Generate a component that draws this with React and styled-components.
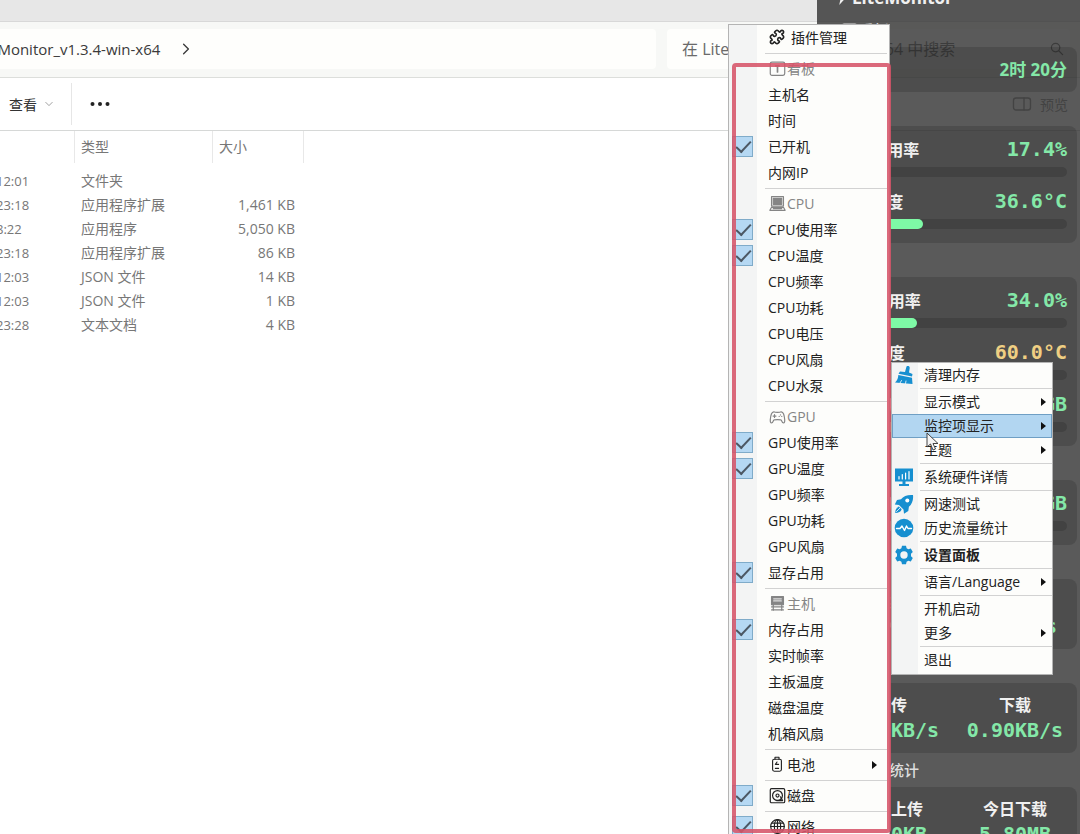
import React, { useState } from 'react';
import styled, { createGlobalStyle, css } from 'styled-components';
import { Puzzle } from 'lucide-react';

const GlobalStyle = createGlobalStyle`
  * {
    box-sizing: border-box;
  }
  body {
    margin: 0;
    font-family: "Open Sans", "Noto Sans CJK SC", sans-serif;
    font-size: 14px;
    color: #222;
    overflow: hidden;
  }
  button, input {
    font: inherit;
    color: inherit;
  }
`;

const Desktop = styled.main`
  position: relative;
  height: 100vh;
  overflow: hidden;
  background: #fff;
`;

/* ---------- file explorer ---------- */

const Explorer = styled.section`
  position: absolute;
  inset: 0 0 0 -48px;
  display: flex;
  flex-direction: column;
  background: #fff;
`;

const TitleStrip = styled.header`
  height: 22px;
  background: #e7e7e7;
  border-bottom: 1px solid #d8d8d8;
`;

const AddressBar = styled.div`
  display: flex;
  gap: 11px;
  padding: 7px 10px 8px 0;
  background: #f7f8f6;
  border-bottom: 1px solid #dcdedb;
`;

const Field = styled.div`
  display: flex;
  align-items: center;
  height: 40px;
  background: #fefefc;
  border-radius: 4px;
  font-size: 16px;
`;

const PathField = styled(Field)`
  flex: 1;
  gap: 20px;
  padding-left: 20px;
  font-size: 15px;
  color: #3a3a3a;
`;

const SearchField = styled(Field)`
  width: 403px;
  padding: 0 6px 0 15px;
  color: #6a6a6a;
`;

const SearchInput = styled.input`
  flex: 1;
  min-width: 0;
  padding: 0;
  border: 0;
  outline: 0;
  background: none;
  &::placeholder {
    color: #6a6a6a;
    opacity: 1;
  }
`;

const Toolbar = styled.div`
  display: flex;
  align-items: center;
  height: 53px;
  padding: 0 12px 0 57px;
  border-bottom: 1px solid #d6d8d7;
`;

const ToolButton = styled.button`
  display: flex;
  align-items: center;
  gap: 8px;
  padding: 0;
  border: 0;
  background: none;
  color: ${({ $muted }) => ($muted ? '#8a8a8a' : '#333')};
`;

const ToolDivider = styled.span`
  width: 1px;
  height: 42px;
  margin: 0 18px;
  background: #e6e6e6;
`;

const Spacer = styled.span`
  flex: 1;
`;

const FileTable = styled.table`
  width: 352px;
  table-layout: fixed;
  border-collapse: collapse;
  color: #777;
  th {
    padding: 0 0 6px;
    font-weight: 400;
    text-align: left;
  }
  td {
    height: 24px;
    padding: 0 9px 0 6px;
    line-height: 24px;
    white-space: nowrap;
  }
  td:first-child {
    padding-left: 44px;
    font-size: 13px;
  }
  td:last-child {
    text-align: right;
  }
`;

const ColumnLabel = styled.span`
  display: block;
  height: 32px;
  padding-left: 6px;
  line-height: 32px;
  border-right: 1px solid #e8e8e8;
`;

/* ---------- monitor ---------- */

const Monitor = styled.aside`
  position: absolute;
  top: -17px;
  right: -9px;
  bottom: 0;
  width: 272px;
  padding: 0 12px;
  overflow: hidden;
  background: rgba(49, 49, 49, 0.8);
  color: #f0f0f0;
`;

const MonitorTitle = styled.h1`
  display: flex;
  align-items: center;
  gap: 3px;
  height: 30px;
  margin: 0;
  padding-left: 6px;
  font-size: 17px;
  line-height: 30px;
`;

const GroupTitle = styled.h2`
  display: flex;
  align-items: center;
  gap: 1px;
  height: 34px;
  margin: 0;
  padding-left: 12px;
  font-size: 15px;
  font-weight: 500;
  line-height: 34px;
  color: #ddd;
`;

const Panel = styled.div`
  display: grid;
  gap: 12px;
  padding: ${({ $short }) => ($short ? '9px 10px 12px' : '11px 10px 14px')};
  border-radius: 8px;
  background: rgba(0, 0, 0, 0.14);
`;

const MetricHead = styled.div`
  display: flex;
  justify-content: space-between;
  align-items: center;
  height: 24px;
  font-size: 16px;
  font-weight: 700;
  white-space: nowrap;
`;

const Value = styled.span`
  font-family: ${({ $text }) => ($text
    ? '"Open Sans", "Noto Sans CJK SC", sans-serif'
    : '"DejaVu Sans Mono", monospace')};
  font-size: ${({ $text }) => ($text ? '17px' : '20px')};
  font-weight: 700;
  color: ${({ $warm }) => ($warm ? '#efcf83' : '#84e8a8')};
`;

const Track = styled.div`
  height: 10px;
  margin-top: 6px;
  border-radius: 5px;
  overflow: hidden;
  background: #424242;
`;

const Fill = styled.div`
  height: 100%;
  border-radius: 5px;
  background: #7efaa6;
`;

const TrafficPanel = styled.div`
  display: grid;
  grid-template-columns: 1fr 1fr;
  padding: 11px 0 9px;
  border-radius: 8px;
  background: rgba(0, 0, 0, 0.14);
  text-align: center;
`;

const TrafficLabel = styled.div`
  font-size: 16px;
  font-weight: 700;
  line-height: 22px;
`;

const TrafficValue = styled(Value)`
  display: block;
  line-height: 28px;
`;

/* ---------- menus ---------- */

const Menu = styled.nav`
  position: absolute;
  width: 162px;
  border: 1px solid #b4b4b4;
  background: linear-gradient(to right, #f3f4f4 0 ${({ $gutter }) => $gutter}, #fdfdfb ${({ $gutter }) => $gutter});
`;

const ItemsMenu = styled(Menu)`
  top: 24px;
  right: 190px;
`;

const ContextMenu = styled(Menu)`
  top: 362px;
  right: 27px;
  padding-bottom: 2px;
`;

const itemBase = css`
  display: flex;
  align-items: center;
  width: 100%;
  border: 0;
  background: none;
  text-align: left;
  white-space: nowrap;
`;

const CheckRow = styled.label`
  ${itemBase}
  gap: 15px;
  height: 26px;
  padding: 0 0 2px 3px;
`;

const CheckBox = styled.input`
  appearance: none;
  flex: none;
  width: 21px;
  height: 21px;
  margin: 0;
  &:checked {
    border: 1px solid #7fabc9;
    background: #b5d8f3;
  }
  &:checked::before {
    content: "";
    display: block;
    width: 13px;
    height: 6px;
    margin: 4px 0 0 3px;
    border: solid #4c5864;
    border-width: 0 0 2px 2px;
    transform: rotate(-47deg);
  }
`;

const Heading = styled.div`
  ${itemBase}
  height: 26px;
  gap: 1px;
  padding: 0 0 2px 40px;
  color: #858585;
`;

const IconRow = styled.button`
  ${itemBase}
  height: 26px;
  gap: ${({ $gap }) => $gap || '1px'};
  padding: 0 12px 2px 40px;
`;

const WithIcon = styled.span`
  display: flex;
  align-items: center;
  gap: 1px;
  margin-left: 1px;
`;

const Rule = styled.hr`
  height: 1px;
  margin: 2px 2px 2px 36px;
  border: 0;
  background: #d2d2d2;
`;

const ContextRule = styled(Rule)`
  margin: 1px 0 1px 28px;
`;

const ContextRow = styled.button`
  ${itemBase}
  height: 24px;
  padding: 0 6px 2px 0;
  font-weight: ${({ $bold }) => ($bold ? 700 : 400)};
  ${({ $active }) => $active && css`
    background: #b2d6f1;
    box-shadow: inset 0 0 0 1px #6f9fc4;
  `}
`;

const IconSlot = styled.span`
  display: flex;
  flex: none;
  width: 32px;
  padding: 2px 0 0 2px;
  color: #168fd0;
`;

const Arrow = styled.span`
  margin: 2px 0 0 auto;
  border: solid transparent;
  border-width: 4px 0 4px 5px;
  border-left-color: #111;
`;

const Highlight = styled.div`
  position: absolute;
  top: 63px;
  right: 189px;
  bottom: 1px;
  width: 159px;
  border: 4px solid rgba(214, 84, 105, 0.88);
  border-radius: 4px;
  pointer-events: none;
`;

const Pointer = styled.svg`
  position: absolute;
  top: 432px;
  right: 140px;
`;

const Svg = ({ size = 17, children, ...rest }) => (
  <svg
    width={size}
    height={size}
    viewBox="0 0 20 20"
    fill="none"
    stroke="currentColor"
    strokeWidth="1.4"
    strokeLinecap="round"
    strokeLinejoin="round"
    aria-hidden="true"
    {...rest}
  >
    {children}
  </svg>
);

const icons = {
  plugin: <Puzzle size={16} strokeWidth={2.4} aria-hidden="true" />,
  board: (
    <Svg>
      <rect x="1.500" y="2.500" width="17" height="15.500" rx="2" />
      <path d="M10 7v7M8 7h4" strokeWidth="2" />
    </Svg>
  ),
  cpu: (
    <Svg>
      <rect x="3" y="2" width="14" height="11" />
      <rect x="5" y="4" width="10" height="7" fill="currentColor" />
      <path d="M3 14.500h14l2 3.500H1zM5 16h10" />
    </Svg>
  ),
  gpu: (
    <Svg>
      <path d="M6 4.500C3 4 2 8.500 1.500 14C1.300 19 4 18.500 5.500 14.500C6 13.500 14 13.500 14.500 14.500C16 18.500 18.700 19 18.500 14C18 8.500 17 4 14 4.500C13 5.500 7 5.500 6 4.500Z" />
      <path d="M6.500 7.800v3.400M4.800 9.500h3.400M13.500 8v.1M15 9.800v.1M12 9.800v.1" />
    </Svg>
  ),
  host: (
    <Svg>
      <rect x="3" y="2" width="14" height="9.500" fill="currentColor" />
      <path d="M5.500 4.500h9M5.500 7h9" stroke="#ddd" />
      <path d="M3 14h14M3 17.500h14M5 11v7M15 11v7" />
    </Svg>
  ),
  battery: (
    <Svg size={16}>
      <rect x="4.500" y="4" width="11" height="15" rx="2" />
      <path d="M7.500 4V1.500h5V4M10 7.500l-2 3h4M8 15.500h4" />
    </Svg>
  ),
  disk: (
    <Svg>
      <rect x="1.500" y="2" width="17" height="16.500" rx="1.500" />
      <circle cx="10" cy="10" r="5.800" />
      <circle cx="10" cy="10" r="1.800" />
      <path d="M13.500 11.500L16 16H9" />
    </Svg>
  ),
  net: (
    <Svg>
      <circle cx="10" cy="10" r="8" />
      <ellipse cx="10" cy="10" rx="3.700" ry="8" />
      <path d="M10 2v16M2 10h16M3.200 6h13.600M3.200 14h13.600" />
    </Svg>
  ),
  broom: (
    <Svg size={20} stroke="none" fill="currentColor">
      <path d="M12.500 1.500C14 .6 15.800 1.200 15.700 3L15 7.500L18.500 9L18 11.500L4.500 8.800L6 6.500L11 7z" />
      <path d="M4.300 10L18 12.700L18.500 19L1 17.500C3.200 15.500 4.200 13 4.300 10z" />
      <path d="M6 18l1.500-2.500M11.500 18.500l.5-2.500" stroke="#fff" strokeWidth=".8" />
    </Svg>
  ),
  chart: (
    <Svg size={20} stroke="none" fill="currentColor">
      <path d="M1 1.500h18v13H1zM8.500 14h3v3h3.500v2H5v-2h3.500z" />
      <path d="M5 12V9.500M8.300 12V7.500M11.600 12V6M15 12V4.500" stroke="#fff" strokeWidth="1.200" />
    </Svg>
  ),
  rocket: (
    <Svg size={20} stroke="none" fill="currentColor">
      <path d="M19 1C13.500.6 9.500 2 7 5.200L3 6L.8 10.500L5 11l4.500 4.500.5 4.200L14.300 17l.6-4.200C18 10.300 19.600 6 19 1z" />
      <circle cx="13.300" cy="6.500" r="2" fill="#fff" />
      <path d="M4.800 12.500C2 13 1.500 15.500 1.200 19C4.500 18.700 7 18 7.700 15.300" />
      <path d="M2.500 17.500l3.500-3.500M1.500 15l2-2" stroke="#fff" strokeWidth=".8" />
    </Svg>
  ),
  pulse: (
    <Svg size={20} stroke="none" fill="currentColor">
      <circle cx="10" cy="10" r="9.300" />
      <path d="M2.500 10.500H6L8 8l2.500 4.500L12.500 8l1.500 2.500h3.500" fill="none" stroke="#fff" strokeWidth="1.400" />
    </Svg>
  ),
  gear: (
    <Svg size={20} stroke="none" fill="currentColor" fillRule="evenodd">
      <path d="M8 .8h4l.6 2.500 1.700.9 2.500-.8 2 3.500-1.800 1.800v2.600l1.800 1.800-2 3.500-2.500-.8-1.700.9-.6 2.500H8l-.6-2.500-1.700-.9-2.500.8-2-3.500L3 11.300V8.700L1.200 6.900l2-3.500 2.500.8 1.700-.9zM10 6.300a3.700 3.700 0 1 0 0 7.400a3.700 3.700 0 1 0 0-7.400z" />
    </Svg>
  ),
};

const files = [
  ['12:01', '文件夹', ''],
  ['23:18', '应用程序扩展', '1,461 KB'],
  ['8:22', '应用程序', '5,050 KB'],
  ['23:18', '应用程序扩展', '86 KB'],
  ['12:03', 'JSON 文件', '14 KB'],
  ['12:03', 'JSON 文件', '1 KB'],
  ['23:28', '文本文档', '4 KB'],
];

const itemGroups = [
  { title: '看板', icon: 'board', items: ['主机名', '时间', '已开机', '内网IP'] },
  { title: 'CPU', icon: 'cpu', items: ['CPU使用率', 'CPU温度', 'CPU频率', 'CPU功耗', 'CPU电压', 'CPU风扇', 'CPU水泵'] },
  { title: 'GPU', icon: 'gpu', items: ['GPU使用率', 'GPU温度', 'GPU频率', 'GPU功耗', 'GPU风扇', '显存占用'] },
  { title: '主机', icon: 'host', items: ['内存占用', '实时帧率', '主板温度', '磁盘温度', '机箱风扇'] },
];

const initialChecked = ['已开机', 'CPU使用率', 'CPU温度', 'GPU使用率', 'GPU温度', '显存占用', '内存占用', '磁盘', '网络'];

const contextGroups = [
  [{ text: '清理内存', icon: 'broom' }],
  [{ text: '显示模式', sub: true }, { text: '监控项显示', sub: true, active: true }, { text: '主题', sub: true }],
  [{ text: '系统硬件详情', icon: 'chart' }],
  [{ text: '网速测试', icon: 'rocket' }, { text: '历史流量统计', icon: 'pulse' }],
  [{ text: '设置面板', icon: 'gear', bold: true }],
  [{ text: '语言/Language', sub: true }],
  [{ text: '开机启动' }, { text: '更多', sub: true }],
  [{ text: '退出' }],
];

const Metric = ({ label, value, percent, warm }) => (
  <div>
    <MetricHead>
      <span>{label}</span>
      <Value $warm={warm}>{value}</Value>
    </MetricHead>
    <Track>
      <Fill style={{ width: `${percent}%` }} />
    </Track>
  </div>
);

const Traffic = ({ cells }) => (
  <TrafficPanel>
    {cells.map(([label, value]) => (
      <div key={label}>
        <TrafficLabel>{label}</TrafficLabel>
        <TrafficValue>{value}</TrafficValue>
      </div>
    ))}
  </TrafficPanel>
);

const ExplorerWindow = () => (
  <Explorer>
    <TitleStrip />
    <AddressBar>
      <PathField>
        <span>LiteMonitor_v1.3.4-win-x64</span>
        <Svg size={12} strokeWidth="2.200"><path d="M6 2l8 8-8 8" /></Svg>
      </PathField>
      <SearchField>
        <SearchInput aria-label="搜索" placeholder="在 LiteMonitor_v1.3.4-win-x64 中搜索" />
        <Svg size={14} strokeWidth="1.800">
          <circle cx="8" cy="8" r="6" />
          <path d="M12.500 12.500L18 18" />
        </Svg>
      </SearchField>
    </AddressBar>
    <Toolbar>
      <ToolButton type="button">
        查看
        <Svg size={8} strokeWidth="2" stroke="#888"><path d="M2 6l8 8 8-8" /></Svg>
      </ToolButton>
      <ToolDivider />
      <ToolButton type="button" aria-label="更多选项">
        <Svg size={20} fill="#222" stroke="none">
          <circle cx="2.500" cy="10" r="2" />
          <circle cx="10" cy="10" r="2" />
          <circle cx="17.500" cy="10" r="2" />
        </Svg>
      </ToolButton>
      <Spacer />
      <ToolButton type="button" $muted>
        <Svg size={20}>
          <rect x="1.500" y="4" width="17" height="12" rx="2.500" />
          <path d="M12 4v12" />
        </Svg>
        预览
      </ToolButton>
    </Toolbar>
    <FileTable>
      <colgroup>
        <col width="123" />
        <col width="138" />
        <col width="91" />
      </colgroup>
      <thead>
        <tr>
          <th aria-label="时间"><ColumnLabel /></th>
          <th><ColumnLabel>类型</ColumnLabel></th>
          <th><ColumnLabel>大小</ColumnLabel></th>
        </tr>
      </thead>
      <tbody>
        {files.map(([time, type, size], index) => (
          // eslint-disable-next-line react/no-array-index-key
          <tr key={index}>
            <td>{time}</td>
            <td>{type}</td>
            <td>{size}</td>
          </tr>
        ))}
      </tbody>
    </FileTable>
  </Explorer>
);

const MonitorWindow = () => (
  <Monitor>
    <MonitorTitle>
      <Svg size={14} fill="currentColor" stroke="none"><path d="M12 0L3 11h5l-2 9L17 8h-6z" /></Svg>
      LiteMonitor
    </MonitorTitle>
    <GroupTitle>
      {icons.board}
      看板
    </GroupTitle>
    <Panel $short>
      <MetricHead>
        <span>已开机</span>
        <Value $text>2时 20分</Value>
      </MetricHead>
    </Panel>
    <GroupTitle>
      {icons.cpu}
      CPU
    </GroupTitle>
    <Panel>
      <Metric label="CPU使用率" value="17.4%" percent={17} />
      <Metric label="CPU温度" value="36.6°C" percent={37} />
    </Panel>
    <GroupTitle>
      {icons.gpu}
      GPU
    </GroupTitle>
    <Panel>
      <Metric label="GPU使用率" value="34.0%" percent={34} />
      <Metric label="GPU温度" value="60.0°C" percent={60} warm />
      <Metric label="显存占用" value="2.1GB" percent={26} />
    </Panel>
    <GroupTitle>
      {icons.host}
      主机
    </GroupTitle>
    <Panel>
      <Metric label="内存占用" value="9.8GB" percent={61} />
    </Panel>
    <GroupTitle>
      {icons.disk}
      磁盘
    </GroupTitle>
    <Traffic cells={[['读取', '0.0KB/s'], ['写入', '0.0KB/s']]} />
    <GroupTitle>
      {icons.net}
      网络
    </GroupTitle>
    <Traffic cells={[['上传', '0.40KB/s'], ['下载', '0.90KB/s']]} />
    <GroupTitle>
      {icons.board}
      流量统计
    </GroupTitle>
    <Traffic cells={[['今日上传', '1.20KB'], ['今日下载', '5.80MB']]} />
  </Monitor>
);

const App = () => {
  const [checked, setChecked] = useState(initialChecked);

  const toggle = (name) => {
    setChecked(checked.includes(name)
      ? checked.filter((item) => item !== name)
      : [...checked, name]);
  };

  const renderCheck = (name, icon) => (
    <CheckRow key={name}>
      <CheckBox type="checkbox" checked={checked.includes(name)} onChange={() => toggle(name)} />
      {icon ? (
        <WithIcon>
          {icons[icon]}
          {name}
        </WithIcon>
      ) : name}
    </CheckRow>
  );

  return (
    <>
      <GlobalStyle />
      <Desktop>
        <ExplorerWindow />
        <MonitorWindow />
        <ItemsMenu $gutter="28px">
          <IconRow type="button" $gap="6px">
            {icons.plugin}
            插件管理
          </IconRow>
          {itemGroups.map(({ title, icon, items }) => (
            <React.Fragment key={title}>
              <Rule />
              <Heading>
                {icons[icon]}
                {title}
              </Heading>
              {items.map((name) => renderCheck(name))}
            </React.Fragment>
          ))}
          <Rule />
          <IconRow type="button" $gap="2px">
            {icons.battery}
            电池
            <Arrow />
          </IconRow>
          <Rule />
          {renderCheck('磁盘', 'disk')}
          <Rule />
          {renderCheck('网络', 'net')}
        </ItemsMenu>
        <ContextMenu $gutter="26px">
          {contextGroups.map((group, index) => (
            <React.Fragment key={group[0].text}>
              {index > 0 && <ContextRule />}
              {group.map(({ text, icon, sub, active, bold }) => (
                <ContextRow type="button" key={text} $active={active} $bold={bold}>
                  <IconSlot>{icons[icon]}</IconSlot>
                  {text}
                  {sub && <Arrow />}
                </ContextRow>
              ))}
            </React.Fragment>
          ))}
        </ContextMenu>
        <Highlight />
        <Pointer width="14" height="20" viewBox="0 0 14 20" aria-hidden="true">
          <path d="M1 1v14l3.500-3 2.500 6 2.500-1-2.500-5.500h5z" fill="#f4f4f4" stroke="#444" />
        </Pointer>
      </Desktop>
    </>
  );
};

export default App;
